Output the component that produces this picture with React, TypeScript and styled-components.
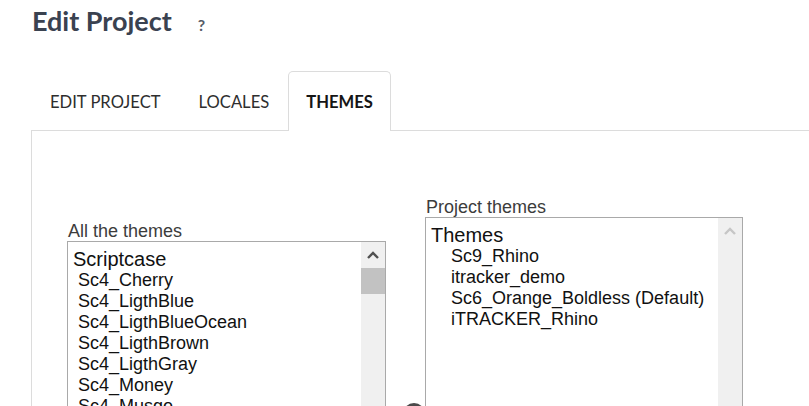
import React from "react";
import styled, { createGlobalStyle } from "styled-components";

const Global = createGlobalStyle`
  html, body { margin: 0; padding: 0; background: #fff; overflow: hidden; }
  body { width: 809px; height: 406px; }
`;

const Page = styled.div`
  padding-left: 31px;
  width: 778px;
  height: 406px;
  overflow: hidden;
`;

const Header = styled.div`
  display: flex;
  align-items: baseline;
  padding-top: 4px;
  height: 34px;
`;

const Title = styled.h1`
  margin: 0 0 0 1px;
  font-family: Lato, sans-serif;
  font-weight: 700;
  font-size: 27px;
  line-height: 34px;
  color: #3a4250;
`;

const Help = styled.span`
  margin-left: 26px;
  font-family: Lato, sans-serif;
  font-weight: 700;
  font-size: 16px;
  color: #555c66;
`;

const TabBar = styled.div`
  display: flex;
  margin-top: 33px;
  margin-bottom: -1px;
  position: relative;
  z-index: 1;
`;

const Tab = styled.div<{ $active?: boolean }>`
  padding: 20px ${(p) => (p.$active ? "17px" : "18px")} 19px;
  border: 1px solid ${(p) => (p.$active ? "#dcdcdc" : "transparent")};
  border-bottom: none;
  border-radius: 5px 5px 0 0;
  background: ${(p) => (p.$active ? "#fff" : "transparent")};
  font-family: Lato, sans-serif;
  font-size: 16.6px;
  line-height: 20px;
  font-weight: ${(p) => (p.$active ? 700 : 400)};
  color: ${(p) => (p.$active ? "#151515" : "#2e2e2e")};
`;

const Panel = styled.div`
  border-top: 1px solid #dcdcdc;
  border-left: 1px solid #dcdcdc;
  height: 300px;
  display: flex;
  align-items: flex-start;
  padding-left: 35px;
`;

const Column = styled.div<{ $top: number }>`
  display: flex;
  flex-direction: column;
  padding-top: ${(p) => p.$top}px;
`;

const Label = styled.div`
  font-family: "Liberation Sans", Arial, sans-serif;
  font-size: 18px;
  line-height: 20px;
  padding-top: 1px;
  color: #3c3c3c;
  padding-left: 1px;
`;

const ListBox = styled.div<{ $width: number }>`
  display: flex;
  width: ${(p) => p.$width}px;
  height: 240px;
  box-sizing: border-box;
  border: 1px solid #a9a9a9;
  background: #fff;
`;

const ListContent = styled.div`
  flex: 1;
  padding: 6px 0 0 5px;
  font-family: "Liberation Sans", Arial, sans-serif;
  color: #111;
`;

const GroupLabel = styled.div`
  font-size: 20px;
  line-height: 22px;
`;

const Option = styled.div<{ $indent: number }>`
  font-size: 18px;
  line-height: 21px;
  padding-left: ${(p) => p.$indent}px;
  white-space: nowrap;
`;

const ScrollTrack = styled.div`
  width: 24px;
  background: #f0f0f0;
  display: flex;
  flex-direction: column;
`;

const ScrollArrow = styled.div`
  height: 26px;
  display: flex;
  align-items: center;
  justify-content: center;
`;

const ScrollThumb = styled.div`
  height: 26px;
  background: #c2c2c2;
`;

const Middle = styled.div`
  width: 39px;
  padding-top: 272px;
  display: flex;
`;

const RoundButton = styled.div`
  margin-left: 17px;
  width: 22px;
  height: 22px;
  border-radius: 50%;
  background: #4a4a4a;
`;

const Chevron = ({ color }: { color: string }) => (
  <svg width="12" height="8" viewBox="0 0 12 8">
    <path d="M1 7 L6 2 L11 7" fill="none" stroke={color} strokeWidth="2.4" />
  </svg>
);

const allThemes = [
  "Sc4_Cherry",
  "Sc4_LigthBlue",
  "Sc4_LigthBlueOcean",
  "Sc4_LigthBrown",
  "Sc4_LigthGray",
  "Sc4_Money",
  "Sc4_Musgo",
  "Sc4_Orange",
];

const projectThemes = [
  "Sc9_Rhino",
  "itracker_demo",
  "Sc6_Orange_Boldless (Default)",
  "iTRACKER_Rhino",
];

export default function App() {
  return (
    <>
      <Global />
      <Page>
        <Header>
          <Title>Edit Project</Title>
          <Help>?</Help>
        </Header>
        <TabBar>
          <Tab>EDIT PROJECT</Tab>
          <Tab>LOCALES</Tab>
          <Tab $active>THEMES</Tab>
        </TabBar>
        <Panel>
          <Column $top={89}>
            <Label>All the themes</Label>
            <ListBox $width={319}>
              <ListContent>
                <GroupLabel>Scriptcase</GroupLabel>
                {allThemes.map((t) => (
                  <Option key={t} $indent={5}>
                    {t}
                  </Option>
                ))}
              </ListContent>
              <ScrollTrack>
                <ScrollArrow>
                  <Chevron color="#505050" />
                </ScrollArrow>
                <ScrollThumb />
              </ScrollTrack>
            </ListBox>
          </Column>
          <Middle>
            <RoundButton />
          </Middle>
          <Column $top={65}>
            <Label>Project themes</Label>
            <ListBox $width={318}>
              <ListContent>
                <GroupLabel>Themes</GroupLabel>
                {projectThemes.map((t) => (
                  <Option key={t} $indent={20}>
                    {t}
                  </Option>
                ))}
              </ListContent>
              <ScrollTrack>
                <ScrollArrow>
                  <Chevron color="#c6c6c6" />
                </ScrollArrow>
              </ScrollTrack>
            </ListBox>
          </Column>
        </Panel>
      </Page>
    </>
  );
}
